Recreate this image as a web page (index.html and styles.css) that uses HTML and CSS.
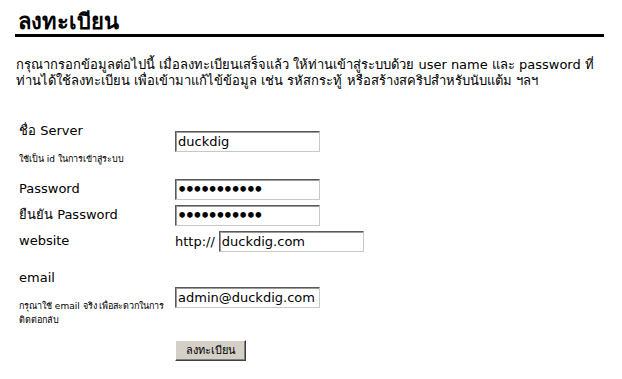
FILE: index.html
```html
<!DOCTYPE html>
<html lang="th">
<head>
<meta charset="utf-8">
<title>ลงทะเบียน</title>
<link rel="stylesheet" href="styles.css">
</head>
<body>
<div class="page">
  <h1 class="title">ลงทะเบียน</h1>
  <p class="intro">กรุณากรอกข้อมูลต่อไปนี้ เมื่อลงทะเบียนเสร็จแล้ว ให้ท่านเข้าสู่ระบบด้วย user name และ password ที่<br>ท่านได้ใช้ลงทะเบียน เพื่อเข้ามาแก้ไข้ข้อมูล เช่น รหัสกระทู้ หรือสร้างสคริปสำหรับนับแต้ม ฯลฯ</p>
  <form class="form">
    <div class="row r1">
      <div class="label top">
        <div>ชื่อ Server</div>
        <div class="hint h1">ใช้เป็น id ในการเข้าสู่ระบบ</div>
      </div>
      <div class="field"><input class="box" type="text" value="duckdig"></div>
    </div>
    <div class="row r2">
      <div class="label">Password</div>
      <div class="field"><input class="box pw" type="password" value="duckdig1234"></div>
    </div>
    <div class="row r3">
      <div class="label">ยืนยัน Password</div>
      <div class="field"><input class="box pw" type="password" value="duckdig1234"></div>
    </div>
    <div class="row r4">
      <div class="label">website</div>
      <div class="field"><span class="prefix">http://</span><input class="box" type="text" value="duckdig.com"></div>
    </div>
    <div class="row r5">
      <div class="label top">
        <div>email</div>
        <div class="hint h2">กรุณาใช้ email จริง เพื่อสะดวกในการ<br>ติดต่อกลับ</div>
      </div>
      <div class="field"><input class="box" type="text" value="admin@duckdig.com"></div>
    </div>
    <div class="row r6">
      <div class="label"></div>
      <div class="field"><button class="btn" type="button">ลงทะเบียน</button></div>
    </div>
  </form>
</div>
</body>
</html>
```
FILE: styles.css
```css
html, body {
  margin: 0;
  padding: 0;
  background: #ffffff;
}
body {
  font-family: Tahoma, "DejaVu Sans", "Noto Sans", sans-serif;
  font-size: 13px;
  color: #000000;
}
.page {
  padding: 0 18px 0 15px;
}
.title {
  margin: 0;
  padding: 9px 0 0 3px;
  font-size: 22px;
  line-height: 25px;
  font-weight: bold;
  border-bottom: 3px solid #000000;
}
.intro {
  margin: 20px 0 0 1px;
  line-height: 16px;
}
.form {
  margin: 0;
  padding-top: 0;
  padding-left: 4px;
  margin-top: 28px;
}
.row {
  display: flex;
  align-items: center;
}
.label {
  width: 156px;
  flex: none;
  line-height: 16px;
}
.label.top {
  align-self: stretch;
}
.field {
  display: flex;
  align-items: center;
}
.r1 { height: 48px; }
.r1 .label { padding-top: 6px; }
.r2 { height: 24px; margin-top: 12px; }
.r3 { height: 24px; margin-top: 2px; }
.r4 { height: 24px; margin-top: 2px; }
.r5 { height: 60px; margin-top: 14px; }
.r5 .label { padding-top: 3px; }
.r6 { height: 24px; margin-top: 11px; }
.hint {
  font-size: 9px;
}
.h1 { margin-top: 14px; line-height: 12px; }
.h2 { margin-top: 13px; line-height: 14px; }
.box {
  box-sizing: border-box;
  width: 145px;
  height: 21px;
  margin: 0;
  padding: 1px 2px;
  font-family: Tahoma, "DejaVu Sans", sans-serif;
  font-size: 13px;
  color: #000000;
  background: #ffffff;
  border: 1px solid #c8c8c8;
  border-top-color: #5a5a5a;
  border-left-color: #5a5a5a;
  box-shadow: inset 1px 1px 0 #9a9a9a;
  outline: none;
}
.box.pw {
  font-size: 16px;
  font-weight: bold;
  letter-spacing: -2.6px;
  padding: 0 1px;
}
.prefix {
  margin-right: 4px;
}
.btn {
  box-sizing: border-box;
  width: 71px;
  height: 21px;
  margin: 0;
  padding: 0;
  font-family: Tahoma, "DejaVu Sans", sans-serif;
  font-size: 11px;
  color: #000000;
  background: #d4d0c8;
  border: 1px solid #404040;
  border-top-color: #ffffff;
  border-left-color: #ffffff;
  box-shadow: inset -1px -1px 0 #808080;
}
```
